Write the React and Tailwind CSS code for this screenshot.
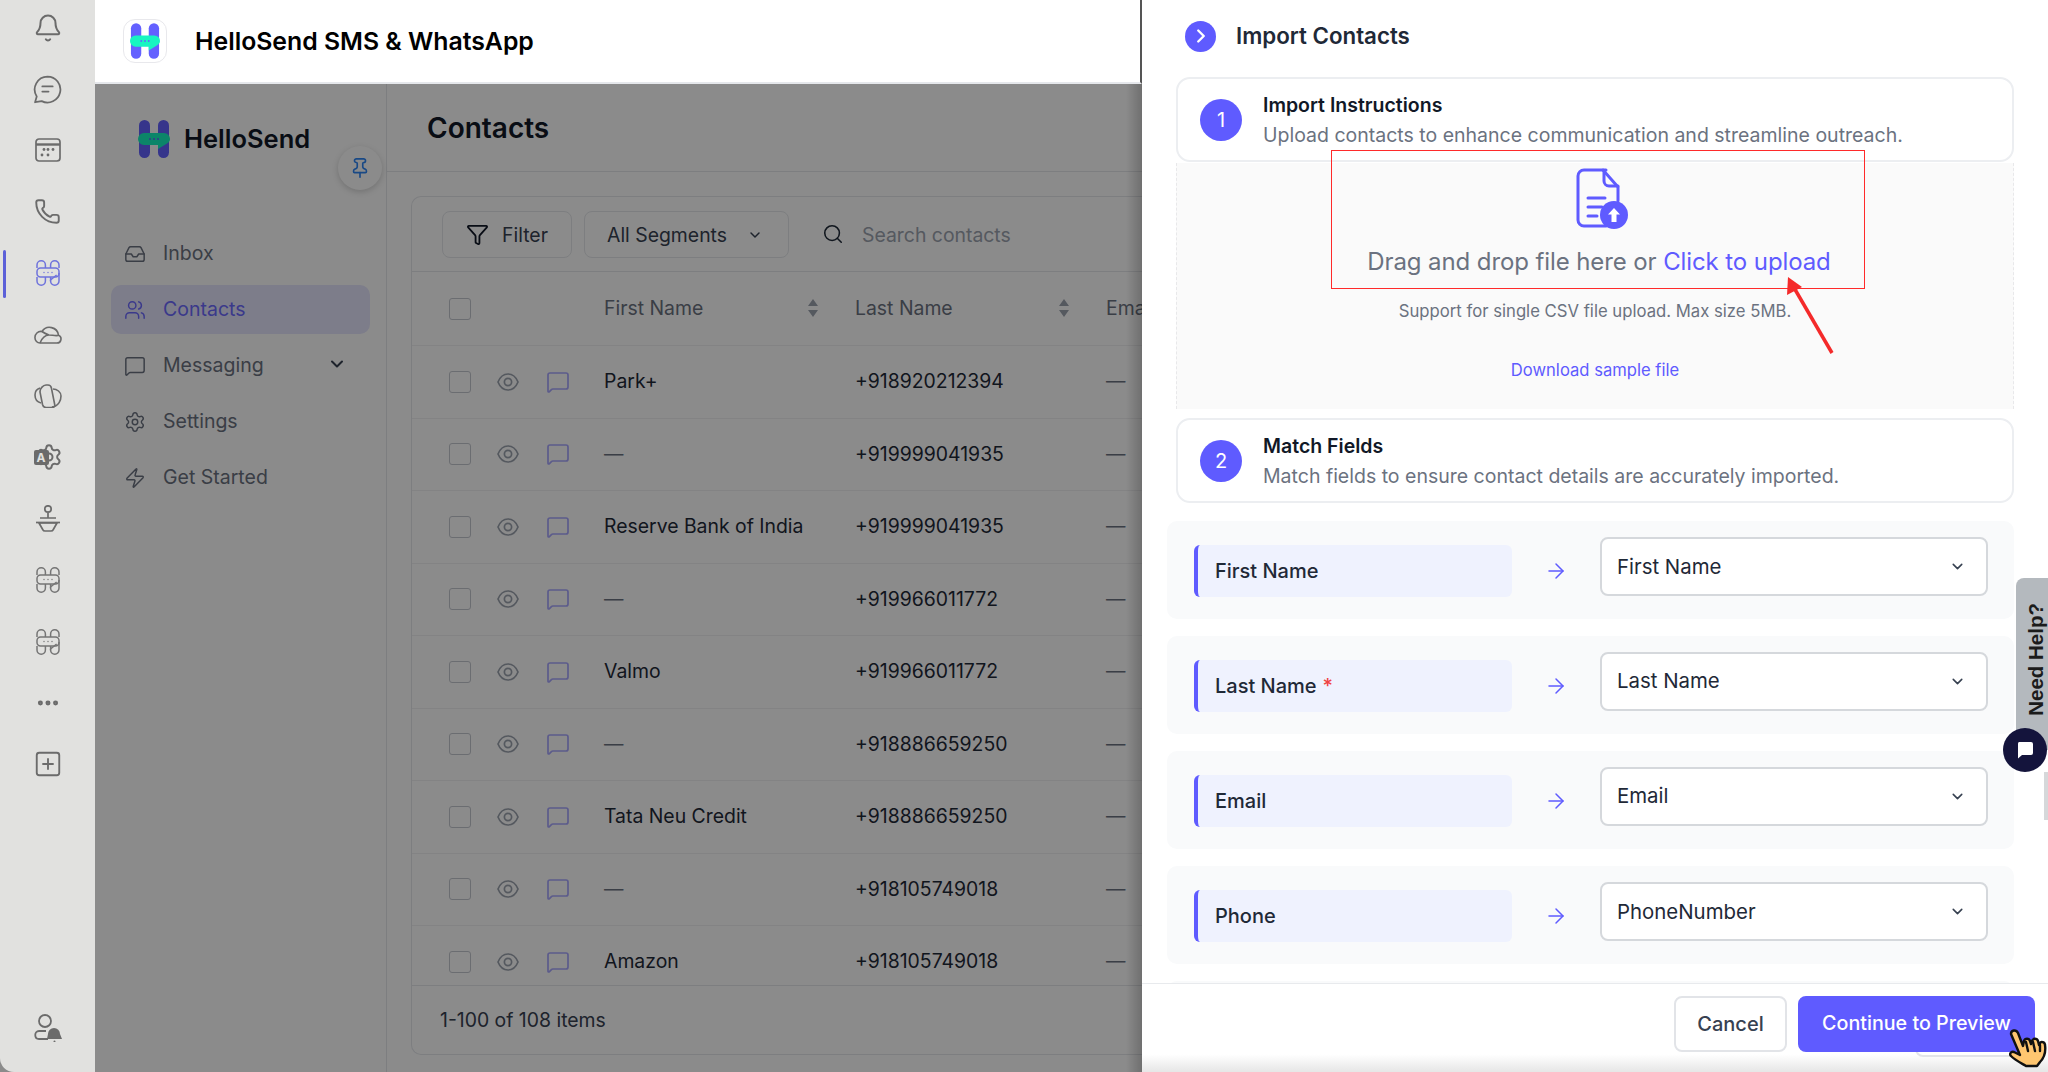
import React from "react";
import { Inbox, Users, MessageSquare, Settings, Zap, ChevronDown, ChevronRight, Pin, Funnel, Search, ArrowRight, Phone, Bell, SquarePlus, Ellipsis } from "lucide-react";

const Logo = ({ className }) => (
  <svg viewBox="0 0 32 38" className={className}>
    <rect x="1" y="0" width="11" height="38" rx="5.5" fill="#6461ff" />
    <rect x="20" y="0" width="11" height="38" rx="5.5" fill="#6461ff" />
    <path d="M6 13h20a6 6 0 0 1 6 6c0 2-1 3-3 4.5L20 29v-4H6a6 6 0 0 1 0-12z" fill="#17f5c1" />
    <circle cx="12" cy="19" r="1" fill="#6461ff" /><circle cx="16" cy="19" r="1" fill="#6461ff" /><circle cx="20" cy="19" r="1" fill="#6461ff" />
  </svg>
);

const OutlineLogo = ({ color = "#757575" }) => (
  <svg viewBox="0 0 24 28" className="w-[24px] h-[28px]" fill="none" stroke={color} strokeWidth="1.5">
    <path d="M1 9V6a4.2 4.2 0 0 1 8.4 0v3M14.6 9V6A4.2 4.2 0 0 1 23 6v3" />
    <path d="M1 18v4a4.2 4.2 0 0 0 8.4 0v-4M14.6 21v1a4.2 4.2 0 0 0 8.4 0v-8" />
    <rect x="1" y="9" width="22" height="9" rx="3.5" />
    <path d="M14.6 18v3l6-5" />
    <circle cx="8" cy="13.5" r=".7" fill={color} stroke="none" /><circle cx="12" cy="13.5" r=".7" fill={color} stroke="none" /><circle cx="16" cy="13.5" r=".7" fill={color} stroke="none" />
  </svg>
);

const c = "#6b6b6b";
const ChatLines = () => (
  <svg viewBox="0 0 28 28" className="w-[29px] h-[29px]" fill="none" stroke={c} strokeWidth="1.7" strokeLinecap="round" strokeLinejoin="round">
    <path d="M14 1.5a12.5 12.5 0 1 1-5.6 23.7L2 26.3l1.6-5.6A12.5 12.5 0 0 1 14 1.5z" />
    <path d="M9 11h10M9 16h6" />
  </svg>
);
const Cal = () => (
  <svg viewBox="0 0 26 24" className="w-[26px] h-[24px]" fill="none" stroke={c} strokeWidth="1.7">
    <rect x="1" y="1" width="24" height="22" rx="3" /><path d="M1 6.5h24" strokeWidth="2.4" />
    <g fill={c} stroke="none"><circle cx="9" cy="11.5" r="1.4" /><circle cx="13" cy="11.5" r="1.4" /><circle cx="18" cy="11.5" r="1.4" /><circle cx="7" cy="17" r="1.4" /><circle cx="13" cy="17" r="1.4" /></g>
  </svg>
);
const CloudIcon = () => (
  <svg viewBox="0 0 28 18" className="w-[28px] h-[18px]" fill="none" stroke={c} strokeWidth="1.6" strokeLinejoin="round">
    <path d="M6 17h17a4 4 0 0 0 1.5-7.7A9 9 0 0 0 8 5.5 6 6 0 0 0 1 12a5 5 0 0 0 5 5z" />
    <path d="M6 17c2-5 5-8 9-8 3 0 6 1 9 .5M15 9c-3-1-5-2-7-3.5" />
  </svg>
);
const Copilot = () => (
  <svg viewBox="0 0 28 24" className="w-[28px] h-[24px]" fill="none" stroke={c} strokeWidth="1.6" strokeLinejoin="round">
    <path d="M12 1h2c2 0 3 1 3.400 3L21 22c-.5 1-2 1.500-4 1.500h-5c-2 0-3-1-3.500-3L6 8c-.3-3 3-7 6-7z" />
    <path d="M6 4C3 5 1 8 1 11c0 4 2 7 6 8M19 5c4 0 8 3 8 7 0 4-2 10-9 11" />
  </svg>
);
const GearA = () => (
  <div className="relative w-[28px] h-[26px]">
    <Settings size={28} color={c} strokeWidth={1.7} className="absolute -top-[1px] left-[1px]" />
    <span className="absolute left-0 top-[6px] w-[15px] h-[15px] rounded-[2px] bg-[#6b6b6b] text-[#e1e1df] text-[12px] leading-[15px] font-bold text-center font-['Inter',sans-serif]">A</span>
  </div>
);
const PersonHost = () => (
  <svg viewBox="0 0 26 28" className="w-[26px] h-[28px]" fill="none" stroke={c} strokeWidth="1.7" strokeLinejoin="round">
    <circle cx="13" cy="4" r="3.2" /><path d="M13 8v5M5 13h16" /><path d="M4 18h18l-4 7c-.3.8-1 1-2 1h-6c-1 0-1.700-.2-2-1z" /><path d="M1 17.500h24" />
  </svg>
);
const UserBell = () => (
  <svg viewBox="0 0 30 28" className="w-[30px] h-[28px]" fill="none" stroke={c} strokeWidth="1.800">
    <circle cx="12" cy="7" r="6" />
    <path d="M13 17H6c-5 0-5 8 0 8h9" />
    <path d="M21 14a6 6 0 0 1 6 6l2 5H14l1-5a6 6 0 0 1 6-6z" fill={c} stroke="none" />
    <circle cx="21.500" cy="27.500" r="1" fill={c} stroke="none" />
  </svg>
);

const railIcons = [
  <Bell size={30} color={c} strokeWidth={1.6} />,
  <ChatLines />,
  <Cal />,
  <Phone size={27} color={c} strokeWidth={1.7} />,
  <OutlineLogo color="#6f73dc" />,
  <CloudIcon />,
  <Copilot />,
  <GearA />,
  <PersonHost />,
  <OutlineLogo />,
  <OutlineLogo />,
  <Ellipsis size={26} color={c} strokeWidth={2.6} />,
  <SquarePlus size={30} color={c} strokeWidth={1.5} />,
];

const Rail = () => (
  <div className="w-[95px] shrink-0 h-full bg-[#e1e1df] rounded-bl-[14px] flex flex-col items-center">
    <div className="-mt-[3px] flex flex-col w-full">
      {railIcons.map((ic, i) => (
        <div key={i} className="relative h-[61.4px] flex items-center justify-center w-full">
          {i === 4 && <span className="absolute left-[3px] top-[7px] w-[3px] h-[48px] rounded bg-[#5c60d8]" />}
          {ic}
        </div>
      ))}
    </div>
    <div className="mt-auto pb-[30px]"><UserBell /></div>
  </div>
);

const Nav = ({ icon: I, label, active, chev }) => (
  <div className={`h-[49px] mx-[16px] px-[13px] rounded-[10px] flex items-center gap-[17px] ${active ? "bg-[#e5e5fd] text-[#6c6aff]" : "text-[#6b7280]"}`}>
    <I size={22} strokeWidth={1.6} />
    <span className="text-[19.5px] flex-1">{label}</span>
    {chev && <ChevronDown size={20} strokeWidth={2.4} className="text-[#374151] mr-[10px] -mt-[4px]" />}
  </div>
);

const Sidebar = () => (
  <div className="relative w-[292px] shrink-0 h-full border-r border-[#e5e7eb] bg-white">
    <div className="h-[145px] pl-[43px] pt-[36px] flex items-start gap-[14px]">
      <Logo className="w-[32px] h-[38px]" />
      <span className="text-[25.5px] font-semibold text-[#111827] leading-[38px]">HelloSend</span>
    </div>
    <div className="absolute right-[4px] top-[62px] w-[44px] h-[44px] z-10 rounded-full bg-white shadow-[0_2px_6px_rgba(0,0,0,0.18)] flex items-center justify-center">
      <Pin size={22} strokeWidth={1.8} className="text-[#2f86f5]" />
    </div>
    <div className="flex flex-col gap-[7px]">
      <Nav icon={Inbox} label="Inbox" />
      <Nav icon={Users} label="Contacts" active />
      <Nav icon={MessageSquare} label="Messaging" chev />
      <Nav icon={Settings} label="Settings" />
      <Nav icon={Zap} label="Get Started" />
    </div>
  </div>
);

const Check = () => <span className="w-[22px] h-[22px] rounded-[3px] border border-[#c4c8cf] bg-white shrink-0" />;
const Eye = () => (
  <svg viewBox="0 0 22 18" className="w-[22px] h-[18px]" fill="none" stroke="#9ca3af" strokeWidth="1.7">
    <path d="M1 9c2-5 6-8 10-8s8 3 10 8c-2 5-6 8-10 8S3 14 1 9z" /><circle cx="11" cy="9" r="3.600" />
  </svg>
);
const Sort = () => (
  <svg viewBox="0 0 12 20" className="w-[12px] h-[20px]" fill="#9ca3af"><path d="M6 1l5 7H1zM1 12h10l-5 7z" /></svg>
);

const rows = [
  ["Park+", "+918920212394"],
  ["—", "+919999041935"],
  ["Reserve Bank of India", "+919999041935"],
  ["—", "+919966011772"],
  ["Valmo", "+919966011772"],
  ["—", "+918886659250"],
  ["Tata Neu Credit", "+918886659250"],
  ["—", "+918105749018"],
  ["Amazon", "+918105749018"],
];

const Table = () => (
  <div className="flex-1 min-w-0 h-full bg-white flex flex-col overflow-hidden">
    <div className="h-[88px] shrink-0 border-b border-[#e5e7eb] pl-[40px] flex items-center">
      <span className="text-[28px] font-semibold text-[#111827]">Contacts</span>
    </div>
    <div className="ml-[24px] mt-[24px] mb-[17px] flex-1 min-h-0 w-[810px] border border-[#e5e7eb] rounded-l-[10px] border-r-0 flex flex-col">
      <div className="h-[75px] shrink-0 border-b border-[#e5e7eb] flex items-center pl-[30px] gap-[12px] text-[19.4px] leading-[28px]">
        <div className="h-[47px] w-[130px] rounded-[8px] border border-[#e5e7eb] flex items-center justify-center gap-[13px] text-[#374151] pt-[1px]">
          <Funnel size={23} strokeWidth={1.9} className="text-[#111827]" /> Filter
        </div>
        <div className="h-[47px] w-[205px] rounded-[8px] border border-[#e5e7eb] flex items-center pl-[22px] text-[#374151] pt-[1px]">
          All Segments <ChevronDown size={16} strokeWidth={2.2} className="ml-[20px]" />
        </div>
        <Search size={22} strokeWidth={1.7} className="ml-[21px] text-[#1f2937]" />
        <span className="ml-[6px] text-[#9ca3af] pt-[1px]">Search contacts</span>
      </div>
      <div className="flex-1 min-h-0 overflow-hidden">
        <div className="h-[74px] border-b border-[#f0f1f3] grid grid-cols-[192px_251px_251px_1fr] items-center text-[19.4px] text-[#6b7280]">
          <div className="pl-[37px] flex"><Check /></div>
          <div className="flex items-center justify-between pr-[36px]"><span>First Name</span><Sort /></div>
          <div className="flex items-center justify-between pr-[36px]"><span>Last Name</span><Sort /></div>
          <div>Email</div>
        </div>
        {rows.map((r, i) => (
          <div key={i} className="h-[72.500px] border-b border-[#f0f1f3] grid grid-cols-[192px_251px_251px_1fr] items-center text-[19.4px] text-[#1f2937]">
            <div className="pl-[37px] flex items-center">
              <Check />
              <span className="ml-[26px]"><Eye /></span>
              <MessageSquare size={24} strokeWidth={1.7} className="ml-[27px] text-[#a9a8ff]" />
            </div>
            <div className={r[0] === "—" ? "text-[#6b7280]" : ""}>{r[0]}</div>
            <div>{r[1]}</div>
            <div className="text-[#6b7280]">—</div>
          </div>
        ))}
      </div>
      <div className="h-[69px] shrink-0 border-t border-[#e5e7eb] flex items-center pl-[28px] pt-[2px] text-[19.4px] text-[#374151]">1-100 of 108 items</div>
    </div>
  </div>
);

const Main = () => (
  <div className="w-[1047px] shrink-0 h-full flex flex-col">
    <div className="h-[84px] shrink-0 bg-white border-b-2 border-r-2 border-b-[#e5e7eb] border-r-[#555555] flex items-center pl-[28px]">
      <div className="w-[44px] h-[44px] rounded-[12px] border border-[#e8e8ec] bg-white flex items-center justify-center">
        <Logo className="w-[30px] h-[36px]" />
      </div>
      <span className="ml-[28px] pt-[2px] text-[24.8px] font-semibold text-black">HelloSend SMS &amp; WhatsApp</span>
    </div>
    <div className="relative flex-1 min-h-0 flex">
      <Sidebar />
      <Table />
      <div className="absolute inset-0 bg-black/[0.455] z-20" />
      <div className="absolute right-0 top-0 bottom-0 w-[16px] z-20 bg-gradient-to-r from-transparent to-black/20" />
    </div>
  </div>
);

const StepCard = ({ n, title, sub }) => (
  <div className="h-[85px] rounded-[14px] border-2 border-[#eceef1] bg-white flex items-center pl-[22px] gap-[21px]">
    <span className="w-[42px] h-[42px] rounded-full bg-[#5f5bff] text-white text-[20px] flex items-center justify-center shrink-0">{n}</span>
    <div className="flex flex-col">
      <span className="text-[19.5px] leading-[30px] font-semibold text-[#111827]">{title}</span>
      <span className="text-[19.5px] leading-[30px] text-[#6b7280]">{sub}</span>
    </div>
  </div>
);

const FileIcon = () => (
  <svg viewBox="0 0 52 62" className="w-[52px] h-[62px]" fill="none" stroke="#5f5bff" strokeWidth="3" strokeLinecap="round" strokeLinejoin="round">
    <path d="M30 2H8a6 6 0 0 0-6 6v44a6 6 0 0 0 6 6h22" />
    <path d="M27 2l15 17v14" /><path d="M28 3v10a5 5 0 0 0 5 5h9" />
    <path d="M12 30h17M12 39h14M12 48h9" />
    <circle cx="38" cy="47" r="14" fill="#5f5bff" stroke="none" />
    <path d="M38 40l-6 6.500h3.500V54h5v-7.500H44z" fill="#fff" stroke="none" />
  </svg>
);

const Dropzone = () => (
  <div className="relative mt-[1px] h-[246px] bg-[#fafafa] border-x border-dashed border-[#e8e8ea] flex flex-col items-center pt-[5px]">
    <div className="absolute left-[154px] -top-[13px] w-[534px] h-[139px] border border-[#ff2a2a] z-10" />
    <svg className="absolute left-[600px] top-[111px] w-[60px] h-[85px] z-10" viewBox="0 0 60 85" fill="none">
      <path d="M55 79L16 12" stroke="#f42a2a" strokeWidth="3.500" />
      <path d="M11 3L25 13L10 21z" fill="#f42a2a" />
    </svg>
    <div className="ml-[13px]"><FileIcon /></div>
    <div className="mt-[14px] ml-[8px] text-[24px] leading-[36px] text-[#6b7280] tracking-[-0.1px]">Drag and drop file here or <span className="text-[#5f5bff]">Click to upload</span></div>
    <div className="mt-[18px] text-[16.7px] leading-[26px] text-[#6b7280]">Support for single CSV file upload. Max size 5MB.</div>
    <div className="mt-[33px] text-[16.6px] leading-[26px] text-[#5f5bff]">Download sample file</div>
  </div>
);

const MapRow = ({ label, value, req, nudge }) => (
  <div className="h-[98px] shrink-0 rounded-[10px] bg-[#f9fafb] flex pl-[27px] pt-[16px]">
    <div className="mt-[8px] w-[318px] h-[52px] rounded-[6px] border-l-[4px] border-[#5f5bff] bg-[#eff2fe] flex items-center pl-[17px] text-[20px] font-medium text-[#1f2937]">
      {label}{req && <span className="ml-[6px] text-[#ef4444]">*</span>}
    </div>
    <div className="w-[88px] mt-[8px] h-[52px] flex items-center justify-center"><ArrowRight size={24} strokeWidth={1.5} className="text-[#5f5bff]" /></div>
    <div className="w-[388px] h-[59px] rounded-[8px] border-2 border-[#d5d8dc] bg-white flex items-center pl-[15px] pr-[20px] justify-between text-[20.4px] text-[#1f2937]">
      <span className={nudge ? "pt-[2px]" : ""}>{value}</span>
      <ChevronDown size={17} strokeWidth={2.2} className="text-[#374151]" />
    </div>
  </div>
);

const Hand = () => (
  <svg viewBox="0 0 38 39" className="absolute right-[1px] bottom-[4px] w-[38px] h-[39px] z-10" fill="#ffc670" stroke="#111111" strokeWidth="2.4" strokeLinejoin="round" strokeLinecap="round">
    <path d="M2 5C2 1 7 0 9 4L14 17L15 12C16 9 20 9 21 12L22 15L23 12C24 9 28 9 29 12L30 16L31 14C32 12 36 13 36 16C37 23 35 29 31 33L28 37L17 37C12 34 6 31 2 27C0 25 2 22 5 23L11 26Z" />
    <path d="M17 13L19 22M24 13L26 22M31 16L31 22" fill="none" />
  </svg>
);

const Panel = () => (
  <div className="flex-1 min-w-0 h-full bg-white flex flex-col overflow-hidden">
    <div className="h-[72px] shrink-0 flex items-center pl-[43px] gap-[20px]">
      <span className="w-[31px] h-[31px] rounded-full bg-[#5f5bff] flex items-center justify-center"><ChevronRight size={22} strokeWidth={2.6} className="text-white" /></span>
      <span className="text-[22.3px] font-semibold text-[#1f2937]">Import Contacts</span>
    </div>
    <div className="flex-1 min-h-0 overflow-hidden pt-[5px]">
      <div className="ml-[34px] mr-[34px]">
        <StepCard n="1" title="Import Instructions" sub="Upload contacts to enhance communication and streamline outreach." />
        <Dropzone />
        <div className="mt-[9px]">
          <StepCard n="2" title="Match Fields" sub="Match fields to ensure contact details are accurately imported." />
        </div>
      </div>
      <div className="ml-[25px] mr-[34px] mt-[18px] flex flex-col gap-[17px]">
        <MapRow label="First Name" value="First Name" nudge />
        <MapRow label="Last Name" value="Last Name" req />
        <MapRow label="Email" value="Email" />
        <MapRow label="Phone" value="PhoneNumber" nudge />
        <div className="h-[60px] shrink-0 rounded-[10px] bg-[#f9fafb]" />
      </div>
    </div>
    <div className="relative h-[89px] shrink-0 border-t border-[#e8eaed] bg-gradient-to-b from-white from-80% to-[#e6e6e6] flex justify-end pt-[12px] pr-[13px] gap-[11px]">
      <div className="w-[113px] h-[56px] rounded-[8px] border-2 border-[#e2e4e8] bg-white flex items-center justify-center text-[20px] font-medium text-[#374151]">Cancel</div>
      <div className="relative w-[237px] h-[56px] rounded-[8px] bg-[#5f5bff] flex items-center justify-center text-[19.7px] font-medium text-white z-[1]">Continue to Preview</div>
      <div className="absolute right-[13px] top-[20px] w-[120px] h-[53px] rounded-[8px] bg-white border-2 border-[#e2e4e8]" />
    </div>
  </div>
);

export default function App() {
  return (
    <div className="relative w-[2048px] h-[1072px] overflow-hidden flex bg-[#8b8b8b] font-['Inter',sans-serif]">
      <Rail />
      <Main />
      <Panel />
      <div className="absolute right-0 top-[578px] w-[32px] h-[172px] rounded-tl-[8px] bg-[#b4b9be] flex items-center justify-center">
        <span className="-rotate-90 whitespace-nowrap text-[20.5px] font-bold text-[#1b1b1b] font-['Liberation_Sans',sans-serif] ml-[8px] -mt-[10px]">Need Help?</span>
      </div>
      <div className="absolute right-[1px] top-[728px] w-[44px] h-[44px] rounded-full bg-[#14143c] flex items-center justify-center">
        <svg viewBox="0 0 20 20" className="w-[20px] h-[20px]"><path d="M4 2h12a2 2 0 0 1 2 2v9a2 2 0 0 1-2 2H7l-4 3.500V4a2 2 0 0 1 1-2z" fill="#fff" /></svg>
      </div>
      <div className="absolute right-[0px] top-[772px] w-[4px] h-[48px] bg-[#d6d8da]" />
      <Hand />
    </div>
  );
}
